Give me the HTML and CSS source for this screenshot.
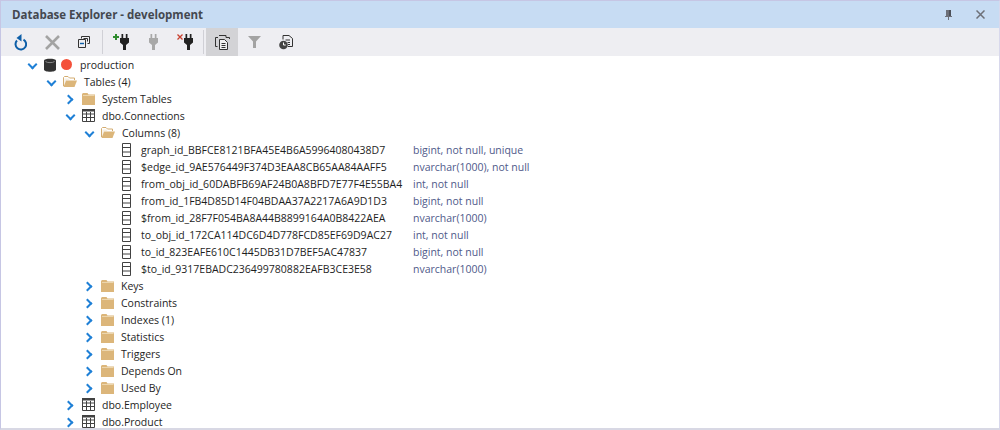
FILE: index.html
```html
<!DOCTYPE html>
<html lang="en">
<head>
<meta charset="utf-8">
<title>Database Explorer</title>
<link rel="stylesheet" href="styles.css">
</head>
<body>
<svg width="0" height="0" class="defs">
  <defs>
    <symbol id="folder" viewBox="0 0 13 12"><path d="M0 2V12H13V1.500H6.500L5.500 0H1L0 1z" fill="#dcb67a"/><path d="M1 2.500H12.500" stroke="#ecd6ae" stroke-width="1" fill="none"/></symbol>
    <symbol id="folder-open" viewBox="0 0 14 11"><path d="M.5 10V1.500L1.500.5H5l1.500 1.500h5V4" fill="none" stroke="#d3ac70"/><path d="M1.500 2.500H5.500L6.500 4H3L1 9z" fill="#f6f0e4"/><path d="M.5 11L3 4.500H14L11.500 11z" fill="#dcb67a"/></symbol>
    <symbol id="table" viewBox="0 0 13 13"><path d="M.5.5h12v12H.5zM.5 5h12M.5 8.500h12M4.500 3v9.500M8.500 3v9.500" fill="none" stroke="#424242"/><path d="M0 0h13v2.500H0z" fill="#424242"/></symbol>
    <symbol id="col" viewBox="0 0 9 14"><path d="M.5.5h8v13h-8zM.5 4.500h8M.5 9h8" fill="none" stroke="#424242"/></symbol>
    <symbol id="plug" viewBox="0 0 9 16"><path d="M1.500 0h1.700v4H1.500zM5.800 0h1.700v4H5.800zM0 4h9v4.500L6 11v5H3v-5L0 8.500z" fill="currentColor"/></symbol>
  </defs>
</svg>
<main class="panel">
  <header class="titlebar">
    <h1 class="title">Database Explorer - development</h1>
    <div class="win-buttons">
      <svg class="win-icon" width="8" height="10" viewBox="0 0 8 10"><path d="M1 0h5v6H1z" fill="#6d7078"/><path d="M4 0h2v6H4z" fill="#4d5058"/><path d="M0 6.500h7M3.500 6.500V10" stroke="#6d7078"/></svg>
      <svg class="win-icon" width="9" height="9" viewBox="0 0 9 9"><path d="M.5.500l8 8M8.500.500l-8 8" stroke="#6d7078" stroke-width="1.500"/></svg>
    </div>
  </header>
  <nav class="toolbar">
    <span class="tool"><svg width="13" height="17" viewBox="0 0 13 17"><path d="M3 6.500A5.300 5.300 0 1 0 9.500 5.600" fill="none" stroke="#0e5fa8" stroke-width="2"/><path d="M7.500 0V7.500L2.500 4z" fill="#0e5fa8"/></svg></span>
    <span class="tool"><svg width="15" height="15" viewBox="0 0 15 15"><path d="M1 1l13 13M14 1L1 14" stroke="#a3a3a3" stroke-width="2.600"/></svg></span>
    <span class="tool"><svg width="12" height="12" viewBox="0 0 12 12"><path d="M3.500 2.500V.5h8v7H9.500M5.500 2.500h4v3" fill="none" stroke="#333"/><path d="M.5 3.500h7v8h-7z" fill="none" stroke="#333"/><path d="M2 7.500h4" stroke="#0e5fa8" stroke-width="1.400"/></svg></span>
    <span class="sep"></span>
    <span class="tool tool-plug"><svg width="16" height="16" viewBox="0 0 16 16"><use href="#plug" x="7" width="9" height="16"/><path d="M0 3h6M3 0v6" stroke="#2e8b2e" stroke-width="2"/></svg></span>
    <span class="tool tool-plug"><svg class="plug-off" width="9" height="16" viewBox="0 0 9 16"><use href="#plug" width="9" height="16"/></svg></span>
    <span class="tool tool-plug"><svg width="16" height="16" viewBox="0 0 16 16"><use href="#plug" x="7" width="9" height="16"/><path d="M.5.500l5 5M5.500.500l-5 5" stroke="#c8402f" stroke-width="1.300"/></svg></span>
    <span class="sep"></span>
    <span class="tool tool-active"><svg width="15" height="15" viewBox="0 0 15 15"><path d="M2.500 11.500H.5V2.500h2.500M4 .5h7v2M11 2.500h3.500V4" fill="none" stroke="#333"/><path d="M4.500 4.500h5l3 3V14.500H4.500z" fill="#f2f2f2" stroke="#333"/><path d="M6.500 8.500h4M6.500 10.500h4M6.500 12.500h4" stroke="#333"/></svg></span>
    <span class="tool"><svg width="13" height="12" viewBox="0 0 13 12"><path d="M0 0h13L8 5.500V12H5V5.500z" fill="#a3a3a3"/></svg></span>
    <span class="tool"><svg width="14" height="15" viewBox="0 0 14 15"><path d="M4 4.500V.5h6l3.500 3v8H9" fill="none" stroke="#333"/><path d="M6.500 5H11M8.500 7.500H11M9 9.500h2" stroke="#333"/><circle cx="4.500" cy="10" r="4.300" fill="#444"/><path d="M4.500 7.500V10h2.200" fill="none" stroke="#fff"/></svg></span>
  </nav>
  <ul class="tree">
    <li class="row lv0"><i class="chev open"></i><svg class="ic-db" width="12" height="14" viewBox="0 0 12 14"><path d="M0 2.500C0 0 12 0 12 2.500V11.500C12 14.500 0 14.500 0 11.500z" fill="#333"/><path d="M1.500 3.500C3 5 9 5 10.500 3.500" fill="none" stroke="#8c8c8c"/></svg><span class="dot"></span><span class="label">production</span></li>
    <li class="row lv1"><i class="chev open"></i><svg class="ic-folder" width="14" height="11"><use href="#folder-open"/></svg><span class="label">Tables (4)</span></li>
    <li class="row lv2"><i class="chev"></i><svg class="ic-folder" width="13" height="12"><use href="#folder"/></svg><span class="label">System Tables</span></li>
    <li class="row lv2"><i class="chev open"></i><svg class="ic-folder" width="13" height="13"><use href="#table"/></svg><span class="label">dbo.Connections</span></li>
    <li class="row lv3"><i class="chev open"></i><svg class="ic-folder" width="14" height="11"><use href="#folder-open"/></svg><span class="label">Columns (8)</span></li>
    <li class="row lvc"><svg class="ic-col" width="9" height="14"><use href="#col"/></svg><span class="col-name">graph_id_BBFCE8121BFA45E4B6A59964080438D7</span><span class="col-type">bigint, not null, unique</span></li>
    <li class="row lvc"><svg class="ic-col" width="9" height="14"><use href="#col"/></svg><span class="col-name">$edge_id_9AE576449F374D3EAA8CB65AA84AAFF5</span><span class="col-type">nvarchar(1000), not null</span></li>
    <li class="row lvc"><svg class="ic-col" width="9" height="14"><use href="#col"/></svg><span class="col-name">from_obj_id_60DABFB69AF24B0A8BFD7E77F4E55BA4</span><span class="col-type">int, not null</span></li>
    <li class="row lvc"><svg class="ic-col" width="9" height="14"><use href="#col"/></svg><span class="col-name">from_id_1FB4D85D14F04BDAA37A2217A6A9D1D3</span><span class="col-type">bigint, not null</span></li>
    <li class="row lvc"><svg class="ic-col" width="9" height="14"><use href="#col"/></svg><span class="col-name">$from_id_28F7F054BA8A44B8899164A0B8422AEA</span><span class="col-type">nvarchar(1000)</span></li>
    <li class="row lvc"><svg class="ic-col" width="9" height="14"><use href="#col"/></svg><span class="col-name">to_obj_id_172CA114DC6D4D778FCD85EF69D9AC27</span><span class="col-type">int, not null</span></li>
    <li class="row lvc"><svg class="ic-col" width="9" height="14"><use href="#col"/></svg><span class="col-name">to_id_823EAFE610C1445DB31D7BEF5AC47837</span><span class="col-type">bigint, not null</span></li>
    <li class="row lvc"><svg class="ic-col" width="9" height="14"><use href="#col"/></svg><span class="col-name">$to_id_9317EBADC236499780882EAFB3CE3E58</span><span class="col-type">nvarchar(1000)</span></li>
    <li class="row lv3"><i class="chev"></i><svg class="ic-folder" width="13" height="12"><use href="#folder"/></svg><span class="label">Keys</span></li>
    <li class="row lv3"><i class="chev"></i><svg class="ic-folder" width="13" height="12"><use href="#folder"/></svg><span class="label">Constraints</span></li>
    <li class="row lv3"><i class="chev"></i><svg class="ic-folder" width="13" height="12"><use href="#folder"/></svg><span class="label">Indexes (1)</span></li>
    <li class="row lv3"><i class="chev"></i><svg class="ic-folder" width="13" height="12"><use href="#folder"/></svg><span class="label">Statistics</span></li>
    <li class="row lv3"><i class="chev"></i><svg class="ic-folder" width="13" height="12"><use href="#folder"/></svg><span class="label">Triggers</span></li>
    <li class="row lv3"><i class="chev"></i><svg class="ic-folder" width="13" height="12"><use href="#folder"/></svg><span class="label">Depends On</span></li>
    <li class="row lv3"><i class="chev"></i><svg class="ic-folder" width="13" height="12"><use href="#folder"/></svg><span class="label">Used By</span></li>
    <li class="row lv2"><i class="chev"></i><svg class="ic-folder" width="13" height="13"><use href="#table"/></svg><span class="label">dbo.Employee</span></li>
    <li class="row lv2"><i class="chev"></i><svg class="ic-folder" width="13" height="13"><use href="#table"/></svg><span class="label">dbo.Product</span></li>
  </ul>
</main>
</body>
</html>
```
FILE: styles.css
```css
* { box-sizing: border-box; }
html, body { margin: 0; padding: 0; }
body { width: 1000px; height: 430px; overflow: hidden; background: #fff; font-family: "Open Sans", "Noto Sans", sans-serif; font-size: 10.5px; color: #1e1e1e; }
.defs { position: absolute; }
.panel { height: 430px; border: 1px solid #c6c6e4; border-bottom: 2px solid #d8d8e4; border-right-color: #d8d8ec; overflow: hidden; display: flex; flex-direction: column; }
.titlebar { flex: 0 0 27px; background: #c7dcf3; display: flex; align-items: center; justify-content: space-between; padding: 0 14px 0 11px; }
.title { margin: 0; font-size: 11.5px; font-weight: 700; color: #44484f; }
.win-buttons { display: flex; align-items: center; gap: 23px; }
.win-icon { display: block; }
.toolbar { flex: 0 0 28px; background: #eeeef2; display: flex; align-items: stretch; padding-left: 3px; }
.tool { width: 32px; display: flex; align-items: center; justify-content: center; }
.tool-plug { color: #222; }
.plug-off { color: #a8a8a8; }
.tool-active { background: #d3d3d6; }
.sep { width: 1px; margin: 2px; background: #d0d0d6; }
.tree { list-style: none; margin: 0; padding: 0; flex: 1; overflow: hidden; }
.row { height: 17px; display: flex; align-items: center; white-space: nowrap; }
.lv0 { padding-left: 26px; }
.lv1 { padding-left: 45px; }
.lv2 { padding-left: 64px; }
.lv3 { padding-left: 83px; }
.lvc { padding-left: 121px; }
.chev { width: 10px; height: 10px; margin-right: 7px; position: relative; flex: none; }
.chev::before { content: ""; position: absolute; left: 0; top: 2px; width: 5px; height: 5px; border-right: 2px solid #1f80d6; border-top: 2px solid #1f80d6; transform: rotate(45deg); }
.chev.open::before { left: 2px; top: 1px; transform: rotate(135deg); }
.ic-db { flex: none; margin-right: 5px; }
.ic-folder { flex: none; margin-right: 7px; }
.ic-col { flex: none; margin-right: 10px; }
.dot { width: 11px; height: 11px; border-radius: 50%; background: #f4513a; margin-right: 8px; flex: none; }
.col-name { width: 272px; flex: none; }
.col-type { color: #4f5a8a; }
```
